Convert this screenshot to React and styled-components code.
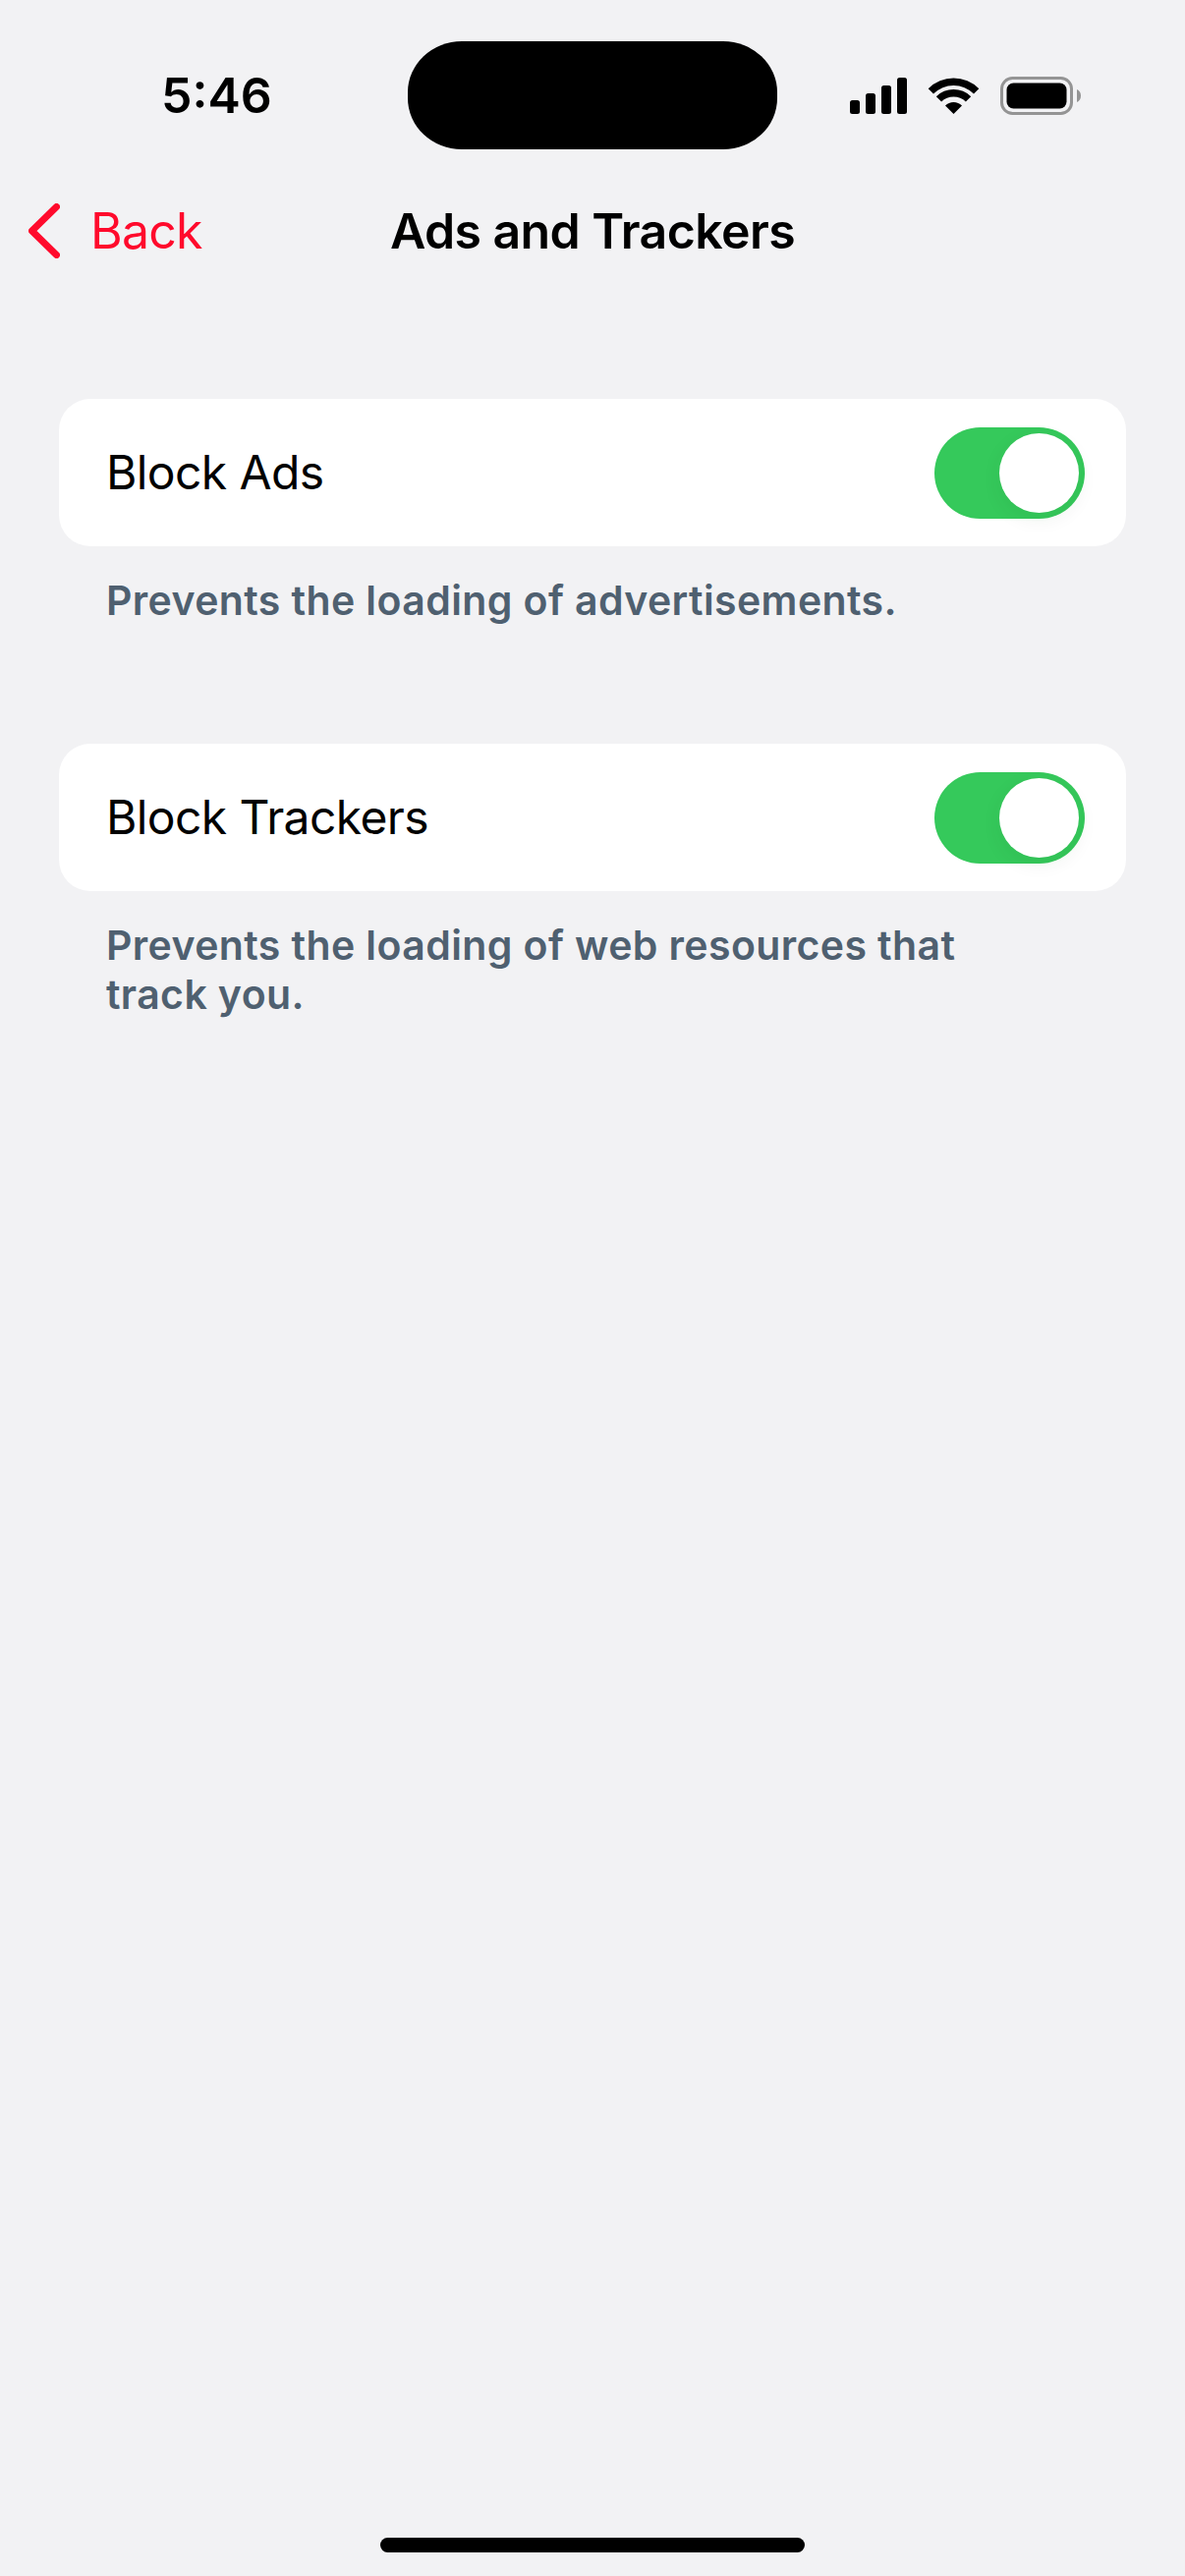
import React from 'react'
import styled, {createGlobalStyle} from 'styled-components'

const GlobalStyle = createGlobalStyle`
    html, body {
        margin: 0;
        padding: 0;
        background: #f2f2f4;
    }

    body {
        font-family: Inter, "Noto Sans", "Liberation Sans", sans-serif;
        -webkit-font-smoothing: antialiased;
    }
`

const Screen = styled.div`
    display: flex;
    flex-direction: column;
    width: 1206px;
    height: 2622px;
    overflow: hidden;
    background: #f2f2f4;
`

const StatusBar = styled.div`
    display: flex;
    align-items: center;
    height: 110px;
    margin-top: 42px;
`

const TimeSlot = styled.div`
    width: 415px;
    padding-left: 164px;
    box-sizing: border-box;
    font-size: 50px;
    font-weight: 600;
    line-height: 1;
    color: #000;
`

const Island = styled.div`
    width: 376px;
    height: 110px;
    border-radius: 55px / 52px;
    background: #000;
`

const StatusIcons = styled.div`
    display: flex;
    align-items: center;
    margin-left: 74px;
    gap: 22px;
`

const NavBar = styled.div`
    display: grid;
    grid-template-columns: 1fr auto 1fr;
    align-items: center;
    height: 166px;
`

const BackButton = styled.div`
    display: flex;
    align-items: center;
    gap: 31px;
    padding-left: 29px;
    font-size: 50px;
    letter-spacing: -0.8px;
    line-height: 1;
    color: #ff0a2c;
`

const NavTitle = styled.div`
    font-size: 50px;
    font-weight: 600;
    letter-spacing: -0.6px;
    line-height: 1;
    color: #000;
`

const Content = styled.div`
    display: flex;
    flex-direction: column;
    flex: 1;
    padding: 88px 60px 0;
`

const Section = styled.section`
    display: flex;
    flex-direction: column;
    margin-bottom: ${({$gap}) => $gap}px;
`

const Card = styled.div`
    display: flex;
    align-items: center;
    justify-content: space-between;
    height: 150px;
    padding: 0 42px 0 48px;
    border-radius: 32px;
    background: #fff;
`

const RowLabel = styled.div`
    font-size: 48px;
    letter-spacing: -0.6px;
    line-height: 1;
    color: #000;
`

const Track = styled.div`
    display: flex;
    justify-content: flex-end;
    align-items: center;
    width: 153px;
    height: 93px;
    padding-right: 6px;
    box-sizing: border-box;
    border-radius: 47px;
    background: #35c95b;
`

const Knob = styled.div`
    width: 81px;
    height: 81px;
    border-radius: 50%;
    background: #fff;
    box-shadow: 0 6px 20px rgba(0, 60, 20, 0.07);
`

const Footnote = styled.p`
    width: 900px;
    margin: 30px 0 0 48px;
    font-size: 41px;
    font-weight: 600;
    letter-spacing: 0.4px;
    line-height: 50px;
    color: #4f6070;
`

const HomeBar = styled.div`
    align-self: center;
    width: 432px;
    height: 15px;
    margin-bottom: 24px;
    border-radius: 8px;
    background: #000;
`

const SignalIcon = () => (
    <svg width="58" height="37" viewBox="0 0 58 37" fill="#000">
        <rect x="0" y="23" width="10" height="14" rx="2.5"/>
        <rect x="16" y="16" width="10" height="21" rx="2.5"/>
        <rect x="32" y="8" width="10" height="29" rx="2.5"/>
        <rect x="48" y="0" width="10" height="37" rx="2.5"/>
    </svg>
)

const WifiIcon = () => (
    <svg width="51" height="37" viewBox="0 0 51 37" fill="#000" style={{overflow: 'visible'}}>
        <path d="M-0.3 11.2A36.5 36.5 0 0 1 51.3 11.2L46 16.5A29 29 0 0 0 5 16.5Z"/>
        <path d="M7.8 19.3A25 25 0 0 1 43.2 19.3L37.9 24.6A17.5 17.5 0 0 0 13.1 24.6Z"/>
        <path d="M17 28.5A12 12 0 0 1 34 28.5L25.5 37Z"/>
    </svg>
)

const BatteryIcon = () => (
    <svg width="82" height="39" viewBox="0 0 82 39">
        <rect x="1.5" y="1.5" width="71" height="36" rx="11" fill="none" stroke="#949494" strokeWidth="3"/>
        <rect x="6.5" y="6.5" width="61" height="26" rx="7" fill="#000"/>
        <path d="M78 13C80.5 14 82 16.5 82 19.5C82 22.5 80.5 25 78 26Z" fill="#949494"/>
    </svg>
)

const BackChevron = () => (
    <svg width="32" height="56" viewBox="0 0 32 56" fill="none">
        <path d="M28.5 3.5L3.5 28L28.5 52.5" stroke="#ff0a2c" strokeWidth="7" strokeLinecap="round" strokeLinejoin="round"/>
    </svg>
)

const settings = [
    {
        label: 'Block Ads',
        note: 'Prevents the loading of advertisements.',
        gap: 121,
    },
    {
        label: 'Block Trackers',
        note: 'Prevents the loading of web resources that track you.',
        gap: 0,
    },
]

const App = () => (
    <Screen>
        <GlobalStyle/>
        <StatusBar>
            <TimeSlot>5:46</TimeSlot>
            <Island/>
            <StatusIcons>
                <SignalIcon/>
                <WifiIcon/>
                <BatteryIcon/>
            </StatusIcons>
        </StatusBar>
        <NavBar>
            <BackButton>
                <BackChevron/>
                Back
            </BackButton>
            <NavTitle>Ads and Trackers</NavTitle>
            <div/>
        </NavBar>
        <Content>
            {settings.map(item => (
                <Section key={item.label} $gap={item.gap}>
                    <Card>
                        <RowLabel>{item.label}</RowLabel>
                        <Track>
                            <Knob/>
                        </Track>
                    </Card>
                    <Footnote>{item.note}</Footnote>
                </Section>
            ))}
        </Content>
        <HomeBar/>
    </Screen>
)

export default App
